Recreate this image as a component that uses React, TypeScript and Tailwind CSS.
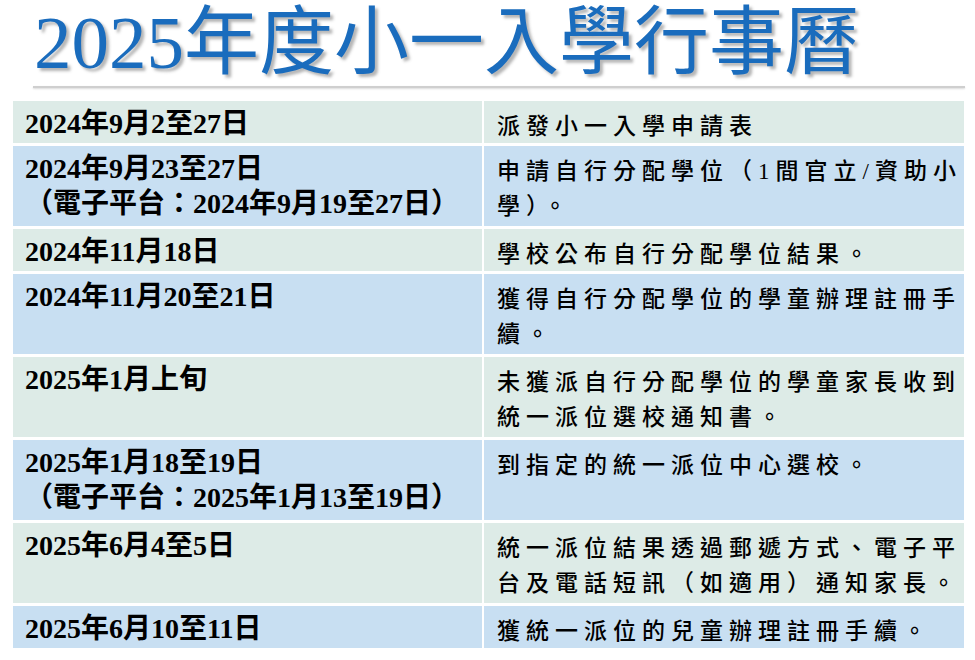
import React from 'react'

const ROWS: { date: string[]; desc: string[]; tone: 'green' | 'blue' }[] = [
  { date: ['2024年9月2至27日'], desc: ['派發小一入學申請表'], tone: 'green' },
  {
    date: ['2024年9月23至27日', '（電子平台：2024年9月19至27日）'],
    desc: ['申請自行分配學位（1間官立/資助小', '學）。'],
    tone: 'blue',
  },
  { date: ['2024年11月18日'], desc: ['學校公布自行分配學位結果。'], tone: 'green' },
  {
    date: ['2024年11月20至21日'],
    desc: ['獲得自行分配學位的學童辦理註冊手', '續。'],
    tone: 'blue',
  },
  {
    date: ['2025年1月上旬'],
    desc: ['未獲派自行分配學位的學童家長收到', '統一派位選校通知書。'],
    tone: 'green',
  },
  {
    date: ['2025年1月18至19日', '（電子平台：2025年1月13至19日）'],
    desc: ['到指定的統一派位中心選校。'],
    tone: 'blue',
  },
  {
    date: ['2025年6月4至5日'],
    desc: ['統一派位結果透過郵遞方式、電子平', '台及電話短訊（如適用）通知家長。'],
    tone: 'green',
  },
  { date: ['2025年6月10至11日'], desc: ['獲統一派位的兒童辦理註冊手續。'], tone: 'blue' },
]

// latin digits in a serif face, the rest in the CJK face
function Mixed({ text }: { text: string }) {
  return (
    <>
      {text.split(/([0-9/]+)/).map((part, i) =>
        /^[0-9/]+$/.test(part) ? (
          <span key={i} className="font-['Liberation_Serif','Times_New_Roman',serif] leading-none">
            {part}
          </span>
        ) : (
          <span key={i}>{part}</span>
        )
      )}
    </>
  )
}

export default function App() {
  return (
    <div className="w-[975px] h-[660px] bg-white overflow-hidden font-['Noto_Sans_CJK_TC',sans-serif]">
      {/* heading */}
      <h1 className="h-[78px] pl-[34px] text-[75px] leading-[71px] font-normal text-[#1a6cbd] whitespace-nowrap [text-shadow:3px_3px_3px_rgba(90,90,90,0.45)]">
        <Mixed text="2025年度小一入學行事曆" />
      </h1>
      <div className="mt-[8px] ml-[33px] w-[932px] h-[2px] bg-[#cfcfcf] shadow-[0_1px_2px_rgba(0,0,0,0.15)]" />

      {/* schedule table */}
      <div className="mt-[13px] ml-[13px] w-[951px] flex flex-col gap-[3px]">
        {ROWS.map((row, i) => {
          const bg = row.tone === 'green' ? 'bg-[#ddebe7]' : 'bg-[#c8dff2]'
          const tall = row.date.length > 1 || row.desc.length > 1
          return (
            <div key={i} className="grid grid-cols-[469px_480px] gap-x-[2px]">
              <div
                className={`${bg} ${tall ? 'h-[80px]' : 'h-[42px]'} pl-[12px] pt-[3px] text-[28px] leading-[35px] font-bold text-black whitespace-nowrap`}
              >
                {row.date.map((line) => (
                  <div key={line}>
                    <Mixed text={line} />
                  </div>
                ))}
              </div>
              <div
                className={`${bg} ${tall ? 'h-[80px]' : 'h-[42px]'} pl-[13px] pt-[6px] text-[23px] leading-[35px] font-medium tracking-[6px] text-black whitespace-nowrap`}
              >
                {row.desc.map((line) => (
                  <div key={line}>
                    <Mixed text={line} />
                  </div>
                ))}
              </div>
            </div>
          )
        })}
      </div>
    </div>
  )
}
